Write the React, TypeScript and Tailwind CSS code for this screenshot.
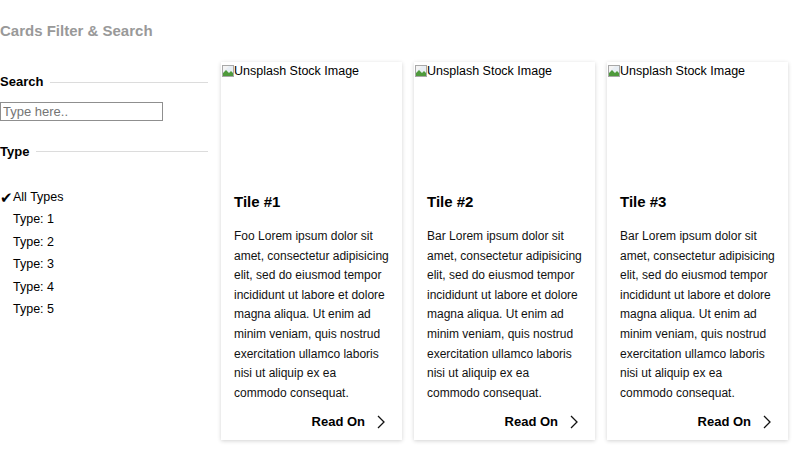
import React from "react";

const body =
  "Lorem ipsum dolor sit amet, consectetur adipisicing elit, sed do eiusmod tempor incididunt ut labore et dolore magna aliqua. Ut enim ad minim veniam, quis nostrud exercitation ullamco laboris nisi ut aliquip ex ea commodo consequat.";

const tiles = [
  { title: "Tile #1", prefix: "Foo" },
  { title: "Tile #2", prefix: "Bar" },
  { title: "Tile #3", prefix: "Bar" },
];

function BrokenImg() {
  return (
    <svg width="12" height="12" viewBox="0 0 12 12" className="shrink-0 mt-[2px] ml-[1px]">
      <rect x="0.5" y="0.5" width="11" height="11" fill="#e8eef4" stroke="#a8a8a8" />
      <path d="M1 11L1 8l3-3 3 3 2-2 2 2v3z" fill="#4f9a3c" />
      <path d="M1 1h6l-6 6z" fill="#f4f4f4" />
    </svg>
  );
}

function Card({ title, prefix }: { title: string; prefix: string }) {
  return (
    <div className="w-[181px] bg-white shadow-[0_1px_4px_rgba(0,0,0,0.18)] flex flex-col">
      <div className="h-[118px] flex items-start pt-[1px] text-[12.5px] leading-[16px] text-black">
        <BrokenImg />
        <span>Unsplash Stock Image</span>
      </div>
      <div className="pl-[13px] pr-[12px] pt-[12px] pb-[8px]">
        <h2 className="text-[15px] leading-[20px] font-bold text-black">{title}</h2>
        <p className="mt-[15px] text-[12px] leading-[19.6px] text-[#111]">
          {prefix} {body}
        </p>
        <div className="mt-[9px] flex items-center justify-end gap-[12px] pr-[5px]">
          <span className="text-[13px] leading-[20px] font-bold text-black">Read On</span>
          <svg width="8" height="14" viewBox="0 0 8 14">
            <path d="M1 1l6 6-6 6" fill="none" stroke="#111" strokeWidth="1.3" />
          </svg>
        </div>
      </div>
    </div>
  );
}

function SectionHeader({ label }: { label: string }) {
  return (
    <div className="flex items-center gap-[7px]">
      <span className="text-[13px] font-bold text-black leading-[16px]">{label}</span>
      <div className="flex-1 h-px bg-[#dcdcdc]" />
    </div>
  );
}

export default function App() {
  return (
    <div className="w-[800px] h-[450px] bg-white overflow-hidden" style={{ fontFamily: '"Liberation Sans", Arial, sans-serif' }}>
      <h1 className="pt-[22px] text-[15px] leading-[18px] font-bold text-[#999]">Cards Filter &amp; Search</h1>
      <div className="mt-[22px] flex gap-[13px]">
        <div className="w-[208px] shrink-0 pt-[12px]">
          <SectionHeader label="Search" />
          <input
            placeholder="Type here.."
            className="mt-[12px] w-[163px] h-[19px] border border-[#8f8f8f] px-[2px] text-[13px] text-black placeholder:text-[#757575] outline-none"
          />
          <div className="mt-[21px]">
            <SectionHeader label="Type" />
          </div>
          <ul className="mt-[26px] text-[12.5px] leading-[22.5px] text-black">
            <li className="flex items-center">
              <span className="w-[13px] text-[15px] leading-none">✔</span>
              <span>All Types</span>
            </li>
            {[1, 2, 3, 4, 5].map((n) => (
              <li key={n} className="pl-[13px]">Type: {n}</li>
            ))}
          </ul>
        </div>
        <div className="flex gap-[12px]">
          {tiles.map((t) => (
            <Card key={t.title} {...t} />
          ))}
        </div>
      </div>
    </div>
  );
}
